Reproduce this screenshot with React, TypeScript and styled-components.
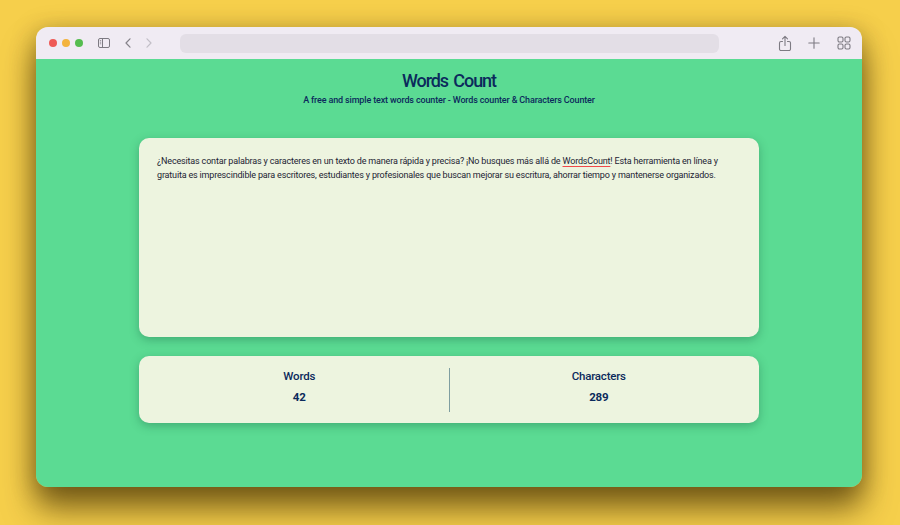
import React from 'react';
import styled, {createGlobalStyle} from 'styled-components';

const GlobalStyle = createGlobalStyle`
	html, body {
		margin: 0;
		padding: 0;
	}
	body {
		width: 900px;
		height: 525px;
		overflow: hidden;
		background: #f6cf4b;
		font-family: Roboto, "Liberation Sans", sans-serif;
	}
`;

const Backdrop = styled.div`
	width: 900px;
	height: 525px;
	box-sizing: border-box;
	padding: 27px 38px 38px 36px;
	background: #f6cf4b;
`;

const BrowserWindow = styled.div`
	height: 460px;
	display: flex;
	flex-direction: column;
	border-radius: 12px;
	overflow: hidden;
`;

const WindowShadow = styled.div`
	border-radius: 12px;
	box-shadow: 0 22px 32px rgba(60, 40, 0, 0.62), 0 4px 24px rgba(60, 40, 0, 0.35);
`;

const Toolbar = styled.div`
	flex: 0 0 32px;
	display: flex;
	align-items: center;
	padding: 0 11px 0 13px;
	background: #f0ebf3;
`;

const Light = styled.span<{ $color: string }>`
	width: 8px;
	height: 8px;
	border-radius: 50%;
	margin-right: 5px;
	background: ${({ $color }) => $color};
`;

const IconSlot = styled.span<{ $gap: number }>`
	display: flex;
	margin-left: ${({ $gap }) => $gap}px;
`;

const AddressBar = styled.div`
	width: 539px;
	height: 19px;
	margin-left: 27px;
	margin-right: auto;
	border-radius: 6px;
	background: #e3dee6;
`;

const Page = styled.main`
	flex: 1;
	display: flex;
	flex-direction: column;
	align-items: center;
	background: #5bdb93;
	color: #0b2a5c;
`;

const Title = styled.h1`
	margin: 11px 0 0;
	font-size: 18px;
	line-height: 21px;
	font-weight: 500;
	letter-spacing: -1.1px;
	word-spacing: 2px;
`;

const Subtitle = styled.p`
	margin: 3px 0 0;
	font-size: 9px;
	line-height: 13px;
	font-weight: 500;
	letter-spacing: -0.15px;
`;

const TextCard = styled.div`
	width: 620px;
	height: 199px;
	box-sizing: border-box;
	margin-top: 31px;
	padding: 15.5px 18px;
	border-radius: 10px;
	background: #edf4df;
	box-shadow: 0 3px 10px rgba(20, 90, 60, 0.35);
	color: #1c2333;
	font-size: 9px;
	line-height: 14px;
	letter-spacing: -0.17px;
`;

const Misspelled = styled.span`
	text-decoration-line: underline;
	text-decoration-color: #f0484a;
	text-decoration-thickness: 1px;
	text-underline-offset: 1.5px;
`;

const StatsCard = styled.div`
	width: 620px;
	height: 67px;
	box-sizing: border-box;
	margin-top: 19px;
	padding: 12px 11px 11px;
	display: grid;
	grid-template-columns: 1fr 1px 1fr;
	border-radius: 10px;
	background: #edf4df;
	box-shadow: 0 3px 10px rgba(20, 90, 60, 0.35);
`;

const Stat = styled.div`
	display: flex;
	flex-direction: column;
	align-items: center;
	font-size: 11.5px;
	font-weight: 500;
	letter-spacing: -0.2px;
`;

const StatLabel = styled.span`
	line-height: 16px;
`;

const StatValue = styled.span`
	margin-top: 5px;
	line-height: 16px;
	font-weight: 700;
`;

const Divider = styled.div`
	background: #7f9ea0;
`;

export default function App() {
	return (
		<Backdrop>
			<GlobalStyle />
			<WindowShadow>
				<BrowserWindow>
					<Toolbar>
						<Light $color="#ee5a56" />
						<Light $color="#f3b33d" />
						<Light $color="#55bd4f" />
						<IconSlot $gap={9}>
							<svg width="14" height="12" viewBox="0 0 14 12" fill="none" stroke="#7d7a82" strokeWidth="1">
								<rect x="1.5" y="1.5" width="11" height="9" rx="1.5" />
								<path d="M5.5 1.5v9" />
								<path d="M2.8 3.6h1.4M2.8 5.2h1.4M2.8 6.8h1.4" strokeWidth="0.8" />
							</svg>
						</IconSlot>
						<IconSlot $gap={13}>
							<svg width="8" height="12" viewBox="0 0 8 12" fill="none" stroke="#85828a" strokeWidth="1.2" strokeLinecap="round" strokeLinejoin="round">
								<path d="M6 1.8L2 6l4 4.2" />
							</svg>
						</IconSlot>
						<IconSlot $gap={13}>
							<svg width="8" height="12" viewBox="0 0 8 12" fill="none" stroke="#c2bfc7" strokeWidth="1.2" strokeLinecap="round" strokeLinejoin="round">
								<path d="M2 1.8L6 6l-4 4.2" />
							</svg>
						</IconSlot>
						<AddressBar />
						<IconSlot $gap={0}>
							<svg width="14" height="17" viewBox="0 0 14 17" fill="none" stroke="#7d7a82" strokeWidth="1.1" strokeLinecap="round" strokeLinejoin="round">
								<path d="M4.5 6.5H3a1.5 1.5 0 0 0-1.5 1.5v6A1.5 1.5 0 0 0 3 15.5h8a1.5 1.5 0 0 0 1.5-1.5V8A1.5 1.5 0 0 0 11 6.5H9.5" />
								<path d="M7 10.5V1.5M4.5 3.8L7 1.3l2.5 2.5" />
							</svg>
						</IconSlot>
						<IconSlot $gap={16}>
							<svg width="12" height="12" viewBox="0 0 12 12" fill="none" stroke="#7d7a82" strokeWidth="1.1" strokeLinecap="round">
								<path d="M6 .8v10.4M.8 6h10.4" />
							</svg>
						</IconSlot>
						<IconSlot $gap={17}>
							<svg width="14" height="14" viewBox="0 0 14 14" fill="none" stroke="#7d7a82" strokeWidth="1.1">
								<rect x="1" y="1" width="5" height="5" rx="1.4" />
								<rect x="8" y="1" width="5" height="5" rx="1.4" />
								<rect x="1" y="8" width="5" height="5" rx="1.4" />
								<rect x="8" y="8" width="5" height="5" rx="1.4" />
							</svg>
						</IconSlot>
					</Toolbar>
					<Page>
						<Title>Words Count</Title>
						<Subtitle>A free and simple text words counter - Words counter &amp; Characters Counter</Subtitle>
						<TextCard>
							¿Necesitas contar palabras y caracteres en un texto de manera rápida y precisa? ¡No busques más allá de <Misspelled>WordsCount</Misspelled>! Esta herramienta en línea y gratuita es imprescindible para escritores, estudiantes y profesionales que buscan mejorar su escritura, ahorrar tiempo y mantenerse organizados.
						</TextCard>
						<StatsCard>
							<Stat>
								<StatLabel>Words</StatLabel>
								<StatValue>42</StatValue>
							</Stat>
							<Divider />
							<Stat>
								<StatLabel>Characters</StatLabel>
								<StatValue>289</StatValue>
							</Stat>
						</StatsCard>
					</Page>
				</BrowserWindow>
			</WindowShadow>
		</Backdrop>
	);
}
